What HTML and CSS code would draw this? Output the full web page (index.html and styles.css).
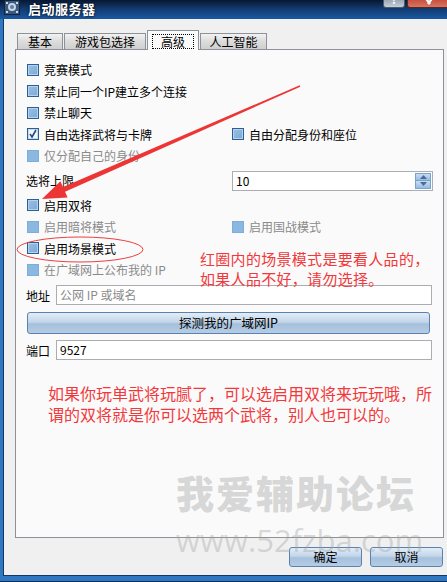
FILE: index.html
```html
<!DOCTYPE html>
<html lang="zh-CN">
<head>
    <meta charset="UTF-8">
    <title>启动服务器</title>
    <link rel="stylesheet" href="styles.css">
</head>
<body>
<div class="window">
    <div class="titlebar">
        <svg class="app-icon" width="16" height="15" viewBox="0 0 16 15">
            <rect x="0" y="0" width="16" height="15" fill="#13233a"/>
            <rect x="1" y="1" width="14" height="13" fill="#3a5a80"/>
            <circle cx="8" cy="7" r="4" fill="#c9d6e6"/>
            <circle cx="8" cy="7" r="2" fill="#5d7fa6"/>
            <circle cx="3" cy="3" r="1" fill="#fff"/>
            <circle cx="13" cy="3" r="1" fill="#fff"/>
            <circle cx="3" cy="12" r="1" fill="#fff"/>
            <circle cx="13" cy="12" r="1" fill="#fff"/>
        </svg>
        <span class="title">启动服务器</span>
        <div class="caption-buttons">
            <div class="cap-help"><span>?</span></div>
            <div class="cap-close">
                <svg width="14" height="8" viewBox="0 0 14 8"><path d="M2 -4 L8 4 M12 -4 L6 4" stroke="#fff" stroke-width="2.2"/></svg>
            </div>
        </div>
    </div>

    <div class="client">
        <div class="tabs">
            <div class="tab">基本</div>
            <div class="tab">游戏包选择</div>
            <div class="tab active"><span class="focus">高级</span></div>
            <div class="tab">人工智能</div>
        </div>

        <div class="panel">
            <div class="row"><span class="box"></span>竞赛模式</div>
            <div class="row"><span class="box"></span>禁止同一个IP建立多个连接</div>
            <div class="row"><span class="box"></span>禁止聊天</div>
            <div class="row two">
                <div class="cell"><span class="box checked">
                    <svg width="10" height="10" viewBox="0 0 10 10"><path d="M2 5 L4 8 L8 1" stroke="#1f4a86" stroke-width="1.6" fill="none"/></svg>
                </span>自由选择武将与卡牌</div>
                <div class="cell"><span class="box"></span>自由分配身份和座位</div>
            </div>
            <div class="row disabled"><span class="box"></span>仅分配自己的身份</div>

            <div class="row two spin-row">
                <div class="cell label">选将上限</div>
                <div class="spinbox">
                    <span class="spin-value">10</span>
                    <div class="spin-arrows">
                        <div class="spin-btn"><svg width="7" height="4" viewBox="0 0 7 4"><path d="M0 4 L3.5 0 L7 4Z" fill="#4a6a9a"/></svg></div>
                        <div class="spin-btn"><svg width="7" height="4" viewBox="0 0 7 4"><path d="M0 0 L3.5 4 L7 0Z" fill="#4a6a9a"/></svg></div>
                    </div>
                </div>
            </div>

            <div class="row"><span class="box"></span>启用双将</div>
            <div class="row two disabled">
                <div class="cell"><span class="box"></span>启用暗将模式</div>
                <div class="cell"><span class="box"></span>启用国战模式</div>
            </div>
            <div class="row"><span class="box"></span>启用场景模式</div>
            <div class="row disabled"><span class="box"></span>在广域网上公布我的 IP</div>

            <div class="field-row addr">
                <span class="field-label">地址</span>
                <div class="lineedit placeholder">公网 IP 或域名</div>
            </div>
            <div class="detect-btn">探测我的广域网IP</div>
            <div class="field-row port">
                <span class="field-label">端口</span>
                <div class="lineedit">9527</div>
            </div>
        </div>

        <div class="footer">
            <div class="push-btn">确定</div>
            <div class="push-btn">取消</div>
        </div>
    </div>

    <!-- annotations drawn on top of the screenshot -->
    <svg class="markup" width="447" height="582" viewBox="0 0 447 582">
        <ellipse cx="80" cy="249.5" rx="63" ry="12.5" fill="none" stroke="#ea4040" stroke-width="1"/>
        <polygon fill="#ee3535" points="299.7,85.3 63,187.1 60.4,181.2 42,199 67.6,197.6 65,191.7 300.3,86.7"/>
    </svg>
    <div class="note note-top">红圈内的场景模式是要看人品的，<br>如果人品不好，请勿选择。</div>
    <div class="note note-bottom">如果你玩单武将玩腻了，可以选启用双将来玩玩哦，所<br>谓的双将就是你可以选两个武将，别人也可以的。</div>
    <div class="watermark">我爱辅助论坛</div>
    <div class="watermark-url">www.52fzba.com</div>
</div>
</body>
</html>
```

FILE: styles.css
```css
body {
    margin: 0;
    width: 447px;
    height: 582px;
    overflow: hidden;
    font-family: "Noto Sans CJK SC", "DejaVu Sans", sans-serif;
    font-size: 12px;
    color: #000;
}

.window {
    position: relative;
    width: 470px;
    height: 582px;
    background: #2f78c4;
    box-sizing: border-box;
    padding: 0 0 5px 3px;
    border-bottom: 1px solid #0d2d52;
}

/* title bar */
.titlebar {
    height: 19px;
    margin-left: -3px;
    display: flex;
    align-items: flex-start;
    background: linear-gradient(to bottom, #071731, #123a6e 45%, #1a58a3);
    position: relative;
}

.app-icon {
    margin: 0 0 0 4px;
}

.title {
    color: #fff;
    font-weight: bold;
    font-size: 13px;
    line-height: 17px;
    margin-left: 8px;
    letter-spacing: 0.5px;
    text-shadow: 0 0 3px #000;
}

.caption-buttons {
    position: absolute;
    left: 383px;
    top: 0;
    display: flex;
    gap: 2px;
}

.cap-help {
    width: 22px;
    height: 8px;
    box-sizing: border-box;
    border: 1px solid #4a5a70;
    border-top: none;
    border-radius: 0 0 3px 3px;
    background: linear-gradient(to bottom, #9aa6b6, #c6ced8);
    overflow: hidden;
    text-align: center;
}

.cap-help span {
    display: block;
    margin-top: -8px;
    color: #fff;
    font-size: 12px;
    font-weight: bold;
    line-height: 14px;
}

.cap-close {
    width: 44px;
    height: 8px;
    box-sizing: border-box;
    border: 1px solid #5a2620;
    border-top: none;
    border-radius: 0 0 3px 3px;
    background: linear-gradient(to bottom, #c8503f, #d97464);
    display: flex;
    justify-content: center;
}

/* client area */
.client {
    height: 557px;
    box-sizing: border-box;
    background: #f0f0f0;
    border-left: 1px solid #16365e;
    border-bottom: 1px solid #16365e;
    padding: 11px 0 0 11px;
}

.tabs {
    display: flex;
    align-items: flex-end;
    height: 19px;
    padding-left: 2px;
    position: relative;
    z-index: 1;
}

.tab {
    height: 16px;
    box-sizing: border-box;
    border: 1px solid #8d929a;
    border-bottom: none;
    background: linear-gradient(to bottom, #f2f2f2, #dcdcdc 50%, #cfcfcf);
    padding: 0;
    line-height: 15px;
    margin-right: 1px;
    text-align: center;
    white-space: nowrap;
}

.tab:nth-child(1) { width: 46px; }
.tab:nth-child(2) { width: 82px; }
.tab:nth-child(4) { width: 67px; }

.tab.active {
    width: 52px;
    height: 20px;
    margin-bottom: -1px;
    background: #fafafa;
    padding: 3px 4px 0;
    line-height: 14px;
}

.tab .focus {
    display: block;
    border: 1px dotted #000;
    line-height: 13px;
}

.panel {
    width: 429px;
    height: 489px;
    box-sizing: border-box;
    border: 1px solid #8d929a;
    background: #fafafa;
    padding: 9px 10px 0 11px;
}

.row {
    height: 21.5px;
    display: flex;
    align-items: center;
}

.row.two {
    display: grid;
    grid-template-columns: 205px 1fr;
    align-items: center;
}

.cell {
    display: flex;
    align-items: center;
}

.label {
    margin-left: -1px;
}

.box {
    width: 12px;
    height: 12px;
    box-sizing: border-box;
    border: 1px solid #2c5f93;
    background: linear-gradient(135deg, #9cc0e4, #78a9d6);
    box-shadow: inset 0 0 0 1px #b7d2ec;
    margin-right: 5px;
    flex: none;
    display: flex;
    align-items: center;
    justify-content: center;
}

.box.checked {
    background: #f3f7fb;
    box-shadow: inset 0 0 0 1px #c8d9ea;
}

.disabled {
    color: #8a8a8a;
}

.disabled .box {
    border-color: #7eadd8;
    background: #8ab8e1;
    box-shadow: none;
}

.spin-row {
    height: 28px;
}

.spinbox {
    width: 201px;
    height: 20px;
    box-sizing: border-box;
    border: 1px solid #abadb3;
    background: #fff;
    display: flex;
    align-items: center;
    justify-content: space-between;
    padding: 1px 1px 1px 3px;
}

.spin-arrows {
    width: 16px;
    height: 16px;
    display: flex;
    flex-direction: column;
    gap: 1px;
    background: #7aa3cc;
    padding: 1px;
    box-sizing: border-box;
}

.spin-btn {
    flex: 1;
    background: linear-gradient(to bottom, #c6dcf1, #97bde3);
    display: flex;
    align-items: center;
    justify-content: center;
}

.field-row {
    display: flex;
    align-items: center;
    height: 20px;
    margin-left: -1px;
}

.field-row.addr { margin-top: 4.5px; }
.field-row.port { margin-top: 6px; }

.field-label {
    width: 30px;
}

.lineedit {
    width: 376px;
    height: 20px;
    box-sizing: border-box;
    border: 1px solid #abadb3;
    background: #fff;
    padding-left: 3px;
    line-height: 18px;
}

.lineedit.placeholder {
    color: #8a8a8a;
}

.detect-btn {
    width: 403px;
    height: 22px;
    margin-top: 7px;
    box-sizing: border-box;
    border: 1px solid #5a82b0;
    border-radius: 3px;
    background: linear-gradient(to bottom, #e2ecf6, #c3d6ea 45%, #a6c0dc 55%, #b5cce4);
    text-align: center;
    line-height: 20px;
    font-size: 12.5px;
}

.footer {
    display: flex;
    gap: 8px;
    margin-top: 9px;
    padding-left: 274px;
}

.push-btn {
    width: 73px;
    height: 20px;
    box-sizing: border-box;
    border: 1px solid #5a82b0;
    border-radius: 3px;
    background: linear-gradient(to bottom, #e2ecf6, #c3d6ea 45%, #a6c0dc 55%, #b5cce4);
    text-align: center;
    line-height: 18px;
}

/* annotations */
.markup {
    position: absolute;
    left: 0;
    top: 0;
    pointer-events: none;
}

.note {
    position: absolute;
    color: #f2383a;
    white-space: nowrap;
}

.note-top {
    left: 200px;
    top: 249px;
    font-size: 15px;
    letter-spacing: 0.3px;
    line-height: 20px;
}

.note-bottom {
    left: 48px;
    top: 383px;
    font-size: 16px;
    line-height: 21px;
}

.watermark {
    position: absolute;
    left: 176px;
    top: 470px;
    font-size: 38px;
    font-weight: 900;
    letter-spacing: 2px;
    line-height: 44px;
    color: rgba(170, 170, 170, 0.45);
}

.watermark-url {
    position: absolute;
    left: 176px;
    top: 522px;
    font-family: "Open Sans", "Noto Sans", sans-serif;
    font-size: 31px;
    line-height: 36px;
    color: rgba(160, 160, 160, 0.38);
}
```
